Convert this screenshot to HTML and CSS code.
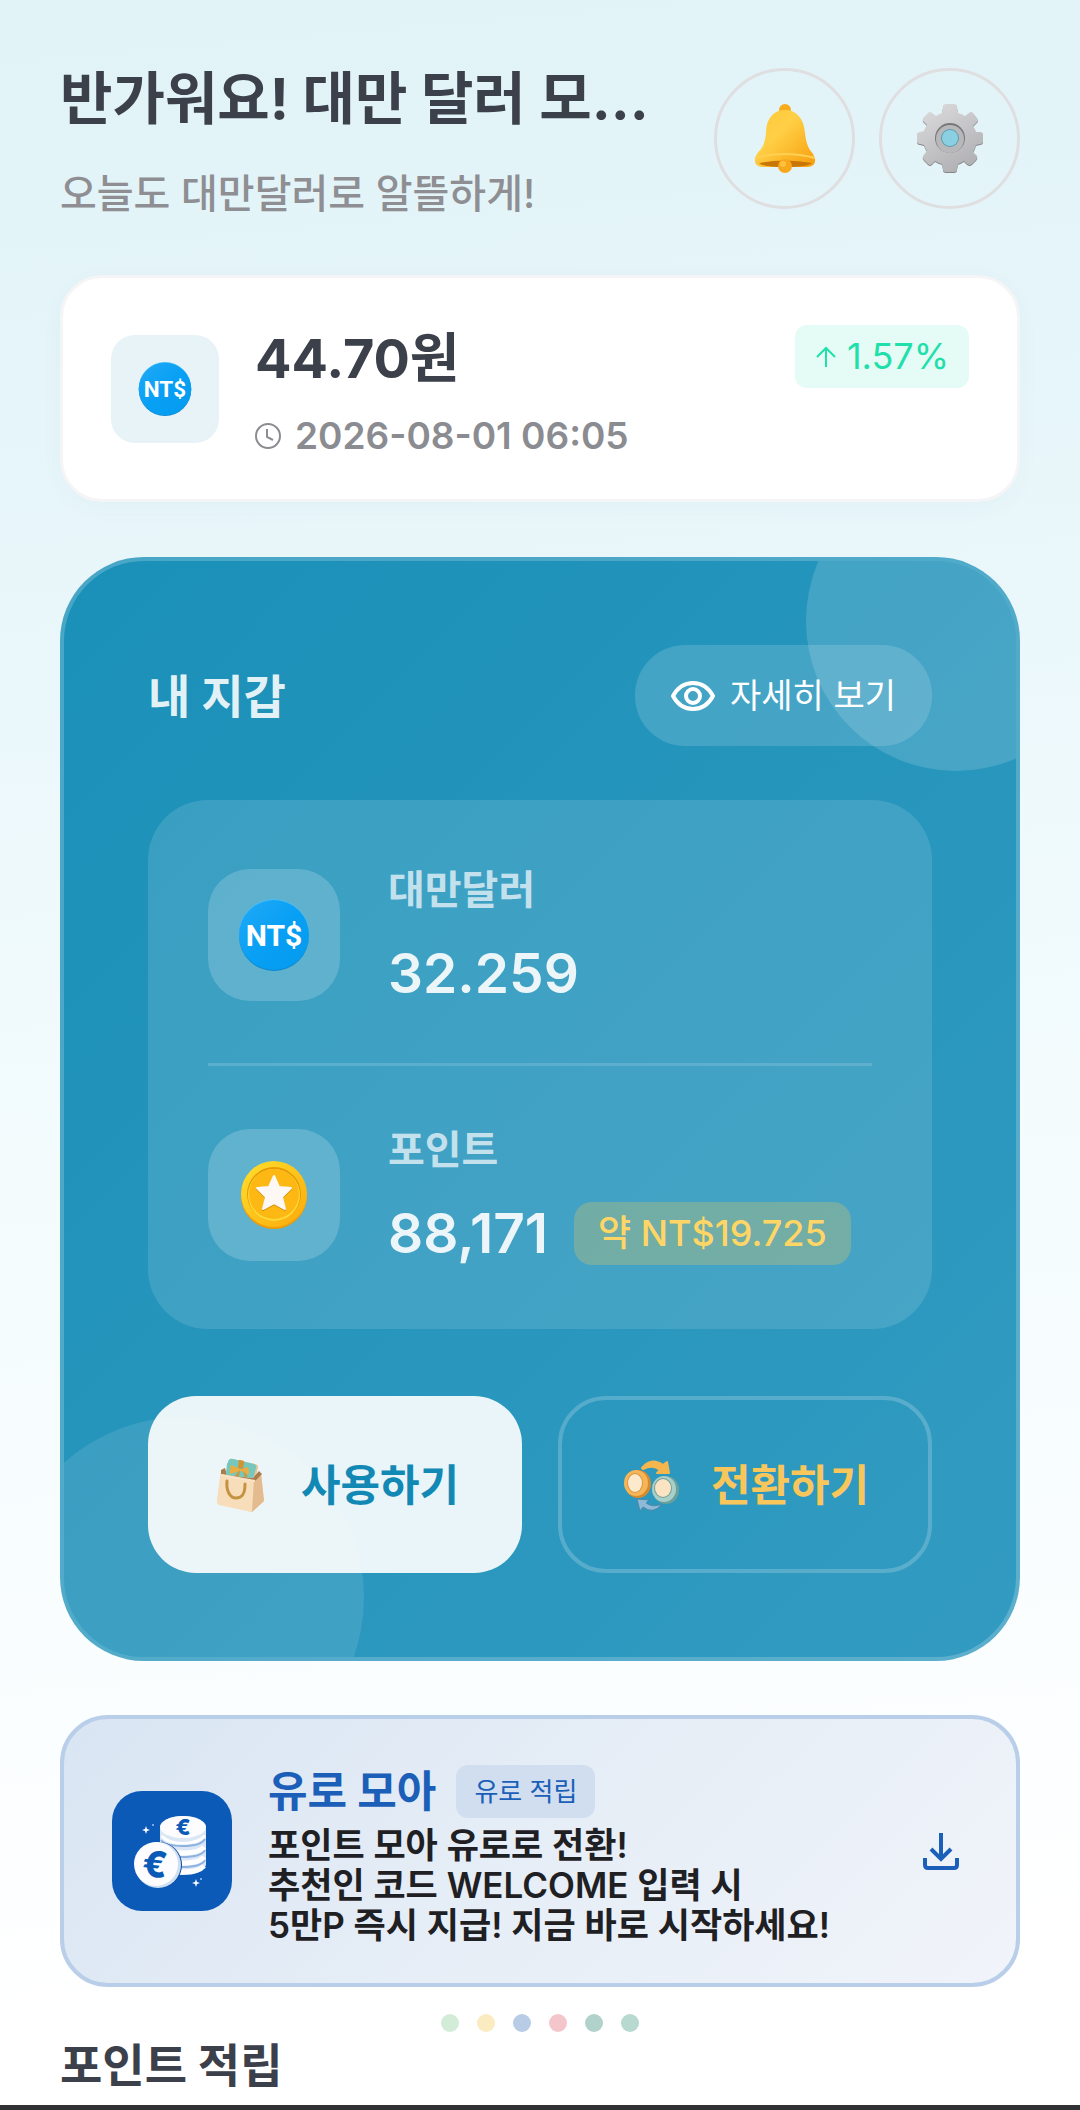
FILE: index.html
```
<!DOCTYPE html>
<html lang="ko">
<head>
  <meta charset="UTF-8">
  <meta name="viewport" content="width=device-width, initial-scale=1.0">
  <title>대만 달러 모아</title>
  <link rel="stylesheet" href="styles.css">
</head>
<body>
  <main class="page">

    <header class="header">
      <div class="greeting">
        <h1>반가워요! 대만 달러 모...</h1>
        <p>오늘도 대만달러로 알뜰하게!</p>
      </div>
      <div class="header-buttons">
        <button type="button" class="round-button" aria-label="알림">
          <svg width="66" height="70" viewBox="0 0 66 70">
            <defs>
              <linearGradient id="bell" x1="0" y1="0" x2="1" y2="1">
                <stop offset="0" stop-color="#ffc93c"/>
                <stop offset="0.4" stop-color="#ffcf45"/>
                <stop offset="1" stop-color="#f79d0c"/>
              </linearGradient>
            </defs>
            <circle cx="33" cy="7" r="6" fill="#f8ac1c"/>
            <path d="M3 56 Q4 51 9 46 Q13 41 14 30 C14 15 22 7 33 7 C44 7 52 15 53 30 Q54 41 58 47 Q62 51 63 56 Q64 64 55 64 L11 64 Q2 64 3 56Z" fill="url(#bell)"/>
            <path d="M7 60 Q33 55 60 60 Q56 64 33 64 Q11 64 7 60Z" fill="#c97704"/>
            <path d="M3 55 Q33 47 63 55" fill="none" stroke="#ffd054" stroke-width="2"/>
            <circle cx="33" cy="63" r="7" fill="#f8a81b"/>
            <circle cx="31" cy="61" r="3" fill="#ffc23e"/>
          </svg>
        </button>
        <button type="button" class="round-button" aria-label="설정">
          <svg width="68" height="70" viewBox="0 0 68 70">
            <defs>
              <linearGradient id="steel" gradientUnits="userSpaceOnUse" x1="14" y1="4" x2="50" y2="66">
                <stop offset="0" stop-color="#d9d9db"/>
                <stop offset="1" stop-color="#b0b0b2"/>
              </linearGradient>
              <path id="gear" d="M27 4 Q27 1 30 1 H38 Q41 1 41 4 L42 10 Q46 11 49 13 L53 10 Q55 8 57 10 L61 15 Q63 17 61 19 L57 23 Q59 26 60 29 L64 29 Q67 29 67 32 V38 Q67 41 64 41 L60 42 Q59 46 57 49 L61 53 Q62 55 60 57 L56 61 Q54 63 51 61 L48 58 Q45 60 42 61 L41 66 Q41 69 38 69 H30 Q27 69 27 66 L26 61 Q22 60 19 58 L16 61 Q14 63 12 61 L8 57 Q6 55 7 53 L11 48 Q9 45 8 42 L4 41 Q1 41 1 38 V32 Q1 29 4 29 L8 28 Q9 25 11 22 L7 18 Q6 16 8 14 L12 10 Q14 8 16 10 L20 13 Q23 11 26 10Z"/>
            </defs>
            <use href="#gear" fill="#848487" transform="translate(0 1)"/>
            <use href="#gear" fill="url(#steel)"/>
            <circle cx="34" cy="35" r="15" fill="#77777a"/>
            <circle cx="34" cy="36" r="14" fill="#b8b8ba"/>
            <circle cx="34" cy="35" r="9" fill="#5b9db1"/>
            <circle cx="34" cy="35" r="8" fill="#8bcfe3"/>
          </svg>
        </button>
      </div>
    </header>

    <section class="rate-card">
      <div class="rate-icon">
        <svg width="54" height="56" viewBox="0 0 72 74">
          <defs>
            <linearGradient id="ntd" x1="0" y1="0" x2="1" y2="1">
              <stop offset="0" stop-color="#22a9f7"/>
              <stop offset="0.5" stop-color="#08a0f4"/>
              <stop offset="1" stop-color="#049bef"/>
            </linearGradient>
            <g id="ntd-coin">
              <circle cx="36" cy="38" r="35" fill="#0a86d2"/>
              <circle cx="36" cy="36" r="35" fill="#4bbdf7"/>
              <circle cx="36" cy="37" r="35" fill="url(#ntd)"/>
              <text class="coin-text" x="36" y="48" text-anchor="middle">NT$</text>
            </g>
          </defs>
          <use href="#ntd-coin"/>
        </svg>
      </div>
      <div class="rate-info">
        <div class="rate-value">44.70원</div>
        <div class="rate-date">
          <svg width="26" height="26" viewBox="0 0 26 26" fill="none" stroke="#8b8c91" stroke-width="2">
            <circle cx="13" cy="13" r="12"/>
            <path d="M12 6 V14 L18 17"/>
          </svg>
          <time datetime="2026-08-01T06:05">2026-08-01 06:05</time>
        </div>
      </div>
      <div class="rate-change">
        <svg width="22" height="24" viewBox="0 0 22 24" fill="none" stroke="#1fe0ab" stroke-width="2">
          <path d="M11 22 V3 M2 12 L11 3 L20 12"/>
        </svg>
        <span>1.57%</span>
      </div>
    </section>

    <section class="wallet">
      <div class="wallet-header">
        <h2>내 지갑</h2>
        <button type="button" class="detail-button">
          <svg width="44" height="30" viewBox="0 0 44 30" fill="none" stroke="#fff" stroke-width="4">
            <path d="M2 15 Q9 2 22 2 Q35 2 42 15 Q35 28 22 28 Q9 28 2 15Z" stroke-linejoin="round"/>
            <circle cx="22" cy="15" r="7"/>
          </svg>
          자세히 보기
        </button>
      </div>

      <div class="balance">
        <div class="balance-row">
          <div class="balance-icon">
            <svg width="72" height="74" viewBox="0 0 72 74"><use href="#ntd-coin"/></svg>
          </div>
          <div>
            <div class="balance-label">대만달러</div>
            <div class="balance-line">
              <span class="balance-value">32.259</span>
            </div>
          </div>
        </div>
        <hr>
        <div class="balance-row">
          <div class="balance-icon">
            <svg width="66" height="68" viewBox="0 0 66 68">
              <defs>
                <linearGradient id="gold" x1="0" y1="0" x2="1" y2="1">
                  <stop offset="0" stop-color="#ffe02e"/>
                  <stop offset="1" stop-color="#fba90a"/>
                </linearGradient>
              </defs>
              <circle cx="33" cy="35" r="33" fill="#ef9c06"/>
              <circle cx="33" cy="33" r="33" fill="url(#gold)"/>
              <circle cx="33" cy="33" r="27" fill="#e79a06"/>
              <circle cx="33" cy="34" r="26" fill="#ffd93a"/>
              <circle cx="33" cy="33" r="25" fill="#fdb813"/>
              <path d="M33 16 L38 27 L50 28 L41 37 L44 49 L33 43 L22 49 L25 37 L16 28 L28 27Z" fill="#d98c08" stroke="#d98c08" stroke-width="2" stroke-linejoin="round"/>
              <path d="M33 15 L38 26 L50 27 L41 36 L44 48 L33 42 L22 48 L25 36 L16 27 L28 26Z" fill="#fdf8f3" stroke="#fdf8f3" stroke-width="2" stroke-linejoin="round"/>
            </svg>
          </div>
          <div>
            <div class="balance-label">포인트</div>
            <div class="balance-line">
              <span class="balance-value">88,171</span>
              <span class="approx">약 NT$19.725</span>
            </div>
          </div>
        </div>
      </div>

      <div class="wallet-actions">
        <button type="button" class="action use">
          <svg width="60" height="60" viewBox="0 0 60 60">
            <path d="M17 8 Q18 3 22 4 L44 9 Q48 10 47 13 L44 25 L15 22Z" fill="#e8c69c"/>
            <path d="M17 7 Q18 3 22 4 L43 9 Q46 10 45 13 L42 24 L15 21Z" fill="#76c7bc"/>
            <path d="M28 5 L33 6 L32 15 L27 15Z" fill="#dba23f"/>
            <path d="M30 16 L20 11 Q18 15 19 20 L30 17 L36 21 Q38 18 37 13Z" fill="#e8ad45"/>
            <path d="M10 15 L15 17 L45 22 L50 18 L53 46 L41 57 L8 49 Q6 49 6 46Z" fill="#f3d3ac"/>
            <path d="M10 19 L43 25 L41 57 L8 50 Q6 49 6 46Z" fill="#f8ddbb"/>
            <path d="M43 25 L50 18 L53 46 L41 57Z" fill="#e3bb8e"/>
            <path d="M10 15 L14 13 L16 20 L42 23 L48 16 L51 19 L44 26 L10 19Z" fill="#a97d4b"/>
            <path d="M16 8 L44 14 L42 23 L15 20Z" fill="#76c7bc"/>
            <path d="M30 14 L20 10 Q18 14 19 19 L30 16 L37 20 Q39 17 37 12Z" fill="#e8ad45"/>
            <path d="M28 5 L33 6 L32 14 L27 13Z M29 15 L24 21 L28 21Z M32 16 L34 22 L37 21Z" fill="#cf9433"/>
            <path d="M10 20 L44 26" stroke="#fae3c5" stroke-width="2"/>
            <path d="M16 26 C15 36 19 43 25 43 C32 43 34 38 34 29" fill="none" stroke="#c5933f" stroke-width="3" stroke-linecap="round"/>
          </svg>
          사용하기
        </button>
        <button type="button" class="action convert">
          <svg width="60" height="60" viewBox="0 0 60 60">
            <path d="M21 13 Q30 2 42 10 L46 7 L48 18 L36 18 L39 15 Q32 9 22 14Z" fill="#f5b64d" stroke="#f5b64d" stroke-width="2" stroke-linejoin="round"/>
            <ellipse cx="17" cy="29" rx="13" ry="14" fill="#d58a2d"/>
            <ellipse cx="15" cy="28" rx="12" ry="13" fill="#f6b658"/>
            <ellipse cx="14" cy="28" rx="8" ry="10" fill="#d99842"/>
            <ellipse cx="14" cy="28" rx="7" ry="9" fill="#fde9cc"/>
            <ellipse cx="45" cy="35" rx="13" ry="14" fill="#6ba09e"/>
            <ellipse cx="43" cy="34" rx="12" ry="13" fill="#a9d0c8"/>
            <ellipse cx="42" cy="33" rx="9" ry="10" fill="#759f98"/>
            <ellipse cx="42" cy="33" rx="8" ry="9" fill="#fbe4c4"/>
            <path d="M41 49 Q32 53 25 48 L28 45 L16 44 L19 56 L22 52 Q32 60 41 49Z" fill="#8dbad6" stroke="#4d87aa"/>
          </svg>
          전환하기
        </button>
      </div>
    </section>

    <a href="#" class="banner">
      <svg class="banner-icon" width="120" height="120" viewBox="0 0 120 120">
        <rect width="120" height="120" rx="30" fill="#0c5ab7"/>
        <!-- 동전 더미 -->
        <path d="M48 38 V76 Q52 84 71 84 Q90 84 94 74 V38Z" fill="#dbe7f7"/>
        <g fill="none" stroke="#8db2e0" stroke-width="2">
          <path d="M49 49 Q53 55 71 55 Q89 55 93 48"/>
          <path d="M49 60 Q53 66 71 66 Q89 66 93 59"/>
          <path d="M49 70 Q53 76 71 76 Q89 76 93 69"/>
        </g>
        <g fill="none" stroke="#fff" stroke-width="5">
          <path d="M51 44 Q55 51 71 51 Q87 51 92 44"/>
          <path d="M51 56 Q55 62 71 62 Q87 62 92 56"/>
          <path d="M51 66 Q55 72 71 72 Q87 72 92 66"/>
          <path d="M51 75 Q55 81 71 81 Q87 81 92 75"/>
        </g>
        <ellipse cx="71" cy="38" rx="23" ry="13" fill="#dce7f5"/>
        <ellipse cx="71" cy="36" rx="23" ry="11" fill="#fdfdff"/>
        <text class="euro-small" x="71" y="44" text-anchor="middle">€</text>
        <circle cx="47" cy="74" r="23" fill="#0a489a"/>
        <circle cx="46" cy="74" r="23" fill="#cfdff3"/>
        <circle cx="44" cy="73" r="22" fill="#fdfdff"/>
        <text class="euro" x="43" y="86" text-anchor="middle" transform="rotate(6 43 73)">€</text>
        <path d="M34 35 L35 38 L38 39 L35 40 L34 43 L33 40 L30 39 L33 38Z M84 88 L85 91 L88 92 L85 93 L84 96 L83 93 L80 92 L83 91Z" fill="#fff"/>
        <circle cx="41" cy="34" r="1" fill="#9cc3f5"/>
        <circle cx="89" cy="88" r="1" fill="#9cc3f5"/>
      </svg>
      <div class="banner-body">
        <div class="banner-title">
          <strong>유로 모아</strong>
          <span>유로 적립</span>
        </div>
        <p>포인트 모아 유로로 전환!<br>추천인 코드 WELCOME 입력 시<br>5만P 즉시 지급! 지금 바로 시작하세요!</p>
      </div>
      <svg class="download" width="36" height="38" viewBox="0 0 36 38" fill="none" stroke="#1b5fb8" stroke-width="4">
        <path d="M18 1 V26 M8 17 L18 27 L28 17"/>
        <path d="M2 26 V33 Q2 36 5 36 H31 Q34 36 34 33 V26"/>
      </svg>
    </a>

    <div class="dots">
      <span class="green"></span>
      <span class="yellow"></span>
      <span class="blue"></span>
      <span class="pink"></span>
      <span class="teal"></span>
      <span class="mint"></span>
    </div>

    <h2 class="section-title">포인트 적립</h2>
  </main>
  <div class="bottom-bar"></div>
</body>
</html>
```

FILE: styles.css
```
* {
  box-sizing: border-box;
}

body {
  margin: 0;
  min-height: 100vh;
  background: linear-gradient(175deg, #e1f3f7 0%, #e5f5f9 18%, #f2fbfd 50%, #fbfeff 80%, #ffffff 92%);
  font-family: Inter, "Noto Sans CJK KR", sans-serif;
  color: #3b404a;
}

h1, h2, p {
  margin: 0;
}

button {
  font-family: inherit;
  border: none;
  padding: 0;
  cursor: pointer;
}

svg {
  display: block;
  flex-shrink: 0;
}

.page {
  padding: 56px 60px 0;
}

/* 상단 인사말 */
.header {
  display: flex;
  justify-content: space-between;
  align-items: center;
}

.greeting h1 {
  font-size: 57px;
  line-height: 86px;
  font-weight: 700;
  white-space: nowrap;
}

.greeting p {
  margin-top: 26px;
  font-size: 40px;
  line-height: 52px;
  font-weight: 500;
  color: #8e8e93;
}

.header-buttons {
  display: flex;
  gap: 24px;
}

.round-button {
  display: flex;
  align-items: center;
  justify-content: center;
  width: 141px;
  height: 141px;
  border: 3px solid #dfdee1;
  border-radius: 50%;
  background: transparent;
}

/* 환율 카드 */
.rate-card {
  display: flex;
  align-items: center;
  gap: 36px;
  margin-top: 55px;
  padding: 42px 48px;
  background: #fff;
  border: 3px solid #f5f4f6;
  border-radius: 42px;
  box-shadow: 0 6px 24px rgba(0, 80, 90, 0.03);
}

.rate-icon {
  display: flex;
  align-items: center;
  justify-content: center;
  width: 108px;
  height: 108px;
  border-radius: 24px;
  background: #e7f3f7;
}

.coin-text {
  font-family: Roboto, sans-serif;
  font-size: 30px;
  font-weight: 700;
  fill: #fff;
}

.rate-info {
  flex: 1;
}

.rate-value {
  font-size: 54px;
  line-height: 78px;
  font-weight: 700;
}

.rate-date {
  display: flex;
  align-items: center;
  gap: 14px;
  margin-top: 17px;
  font-size: 37px;
  line-height: 42px;
  font-weight: 600;
  color: #8b8c91;
}

.rate-change {
  display: flex;
  align-items: center;
  align-self: flex-start;
  gap: 10px;
  margin-top: 5px;
  padding: 0 20px;
  border-radius: 12px;
  background: #e5fbf5;
  color: #1fe0ab;
  font-size: 36px;
  line-height: 63px;
}

/* 내 지갑 */
.wallet {
  position: relative;
  overflow: hidden;
  margin-top: 55px;
  padding: 84px;
  border: 4px solid rgba(255, 255, 255, 0.2);
  border-radius: 84px;
  background: linear-gradient(135deg, #1a90b8, #339bc1) border-box;
}

.wallet::before,
.wallet::after {
  content: "";
  position: absolute;
  border-radius: 50%;
}

.wallet::before {
  top: -90px;
  right: -90px;
  width: 300px;
  height: 300px;
  background: rgba(255, 255, 255, 0.15);
}

.wallet::after {
  bottom: -120px;
  left: -60px;
  width: 360px;
  height: 360px;
  background: rgba(255, 255, 255, 0.1);
}

.wallet-header,
.balance,
.wallet-actions {
  position: relative;
  z-index: 1;
}

.wallet-header {
  display: flex;
  justify-content: space-between;
  align-items: center;
}

.wallet-header h2 {
  font-size: 46px;
  line-height: 66px;
  font-weight: 700;
  color: rgba(255, 255, 255, 0.9);
}

.detail-button {
  display: flex;
  align-items: center;
  gap: 15px;
  padding: 0 36px;
  border-radius: 50px;
  background: rgba(255, 255, 255, 0.15);
  color: #fff;
  font-size: 34px;
  line-height: 101px;
}

.balance {
  margin-top: 54px;
  padding: 60px;
  border-radius: 60px;
  background: rgba(255, 255, 255, 0.12);
}

.balance hr {
  height: 3px;
  margin: 54px 0;
  border: none;
  background: rgba(255, 255, 255, 0.15);
}

.balance-row {
  display: flex;
  align-items: center;
  gap: 48px;
}

.balance-icon {
  display: flex;
  align-items: center;
  justify-content: center;
  width: 132px;
  height: 132px;
  border-radius: 42px;
  background: rgba(255, 255, 255, 0.18);
}

.balance-label {
  font-size: 40px;
  line-height: 60px;
  font-weight: 600;
  color: rgba(255, 255, 255, 0.7);
}

.balance-line {
  display: flex;
  align-items: center;
  gap: 26px;
  margin-top: 17px;
}

.balance-value {
  font-size: 55px;
  line-height: 72px;
  font-weight: 600;
  color: rgba(255, 255, 255, 0.9);
}

.approx {
  padding: 0 24px;
  border-radius: 18px;
  background: rgba(255, 204, 77, 0.25);
  color: #ffd666;
  font-size: 36px;
  line-height: 63px;
  font-weight: 500;
}

.wallet-actions {
  display: grid;
  grid-template-columns: 1fr 1fr;
  gap: 36px;
  margin-top: 67px;
}

.action {
  display: flex;
  align-items: center;
  justify-content: center;
  gap: 30px;
  height: 177px;
  border-radius: 48px;
  font-size: 43px;
  line-height: 60px;
  font-weight: 700;
}

.action.use {
  background: rgba(255, 255, 255, 0.9);
  color: #1289b5;
}

.action.convert {
  border: 4px solid rgba(255, 255, 255, 0.2);
  background: transparent;
  color: #f8c65b;
}

/* 유로 모아 배너 */
.banner {
  display: flex;
  align-items: center;
  gap: 36px;
  margin-top: 54px;
  padding: 38px 57px 38px 48px;
  border: 4px solid #b9cee8;
  border-radius: 48px;
  background: linear-gradient(135deg, #d9e5f3, #e5edf6 45%, #f1f4fa);
  color: #1f2023;
  text-decoration: none;
}

.banner-body {
  flex: 1;
  padding-top: 7px;
}

.banner-title {
  display: flex;
  align-items: center;
  gap: 20px;
}

.banner-title strong {
  font-size: 43px;
  line-height: 54px;
  font-weight: 700;
  color: #1b5fb8;
}

.banner-title span {
  padding: 0 18px;
  border-radius: 12px;
  background: #d0deef;
  color: #1b5fb8;
  font-size: 26px;
  line-height: 53px;
}

.banner-body p {
  margin-top: 7px;
  font-size: 35px;
  line-height: 40px;
  font-weight: 600;
}

.euro {
  font-size: 36px;
  font-weight: 800;
  fill: #0c5ab7;
}

.euro-small {
  font-size: 22px;
  font-weight: 800;
  fill: #0c5ab7;
}

/* 배너 페이지 표시 */
.dots {
  display: flex;
  justify-content: center;
  gap: 18px;
  margin-top: 27px;
}

.dots span {
  width: 18px;
  height: 18px;
  border-radius: 50%;
}

.dots .green { background: #d3ecd7; }
.dots .yellow { background: #faebc0; }
.dots .blue { background: #b8cce6; }
.dots .pink { background: #f4c6cc; }
.dots .teal { background: #b1d2ca; }
.dots .mint { background: #b7d9d0; }

.section-title {
  font-size: 46px;
  line-height: 66px;
  font-weight: 700;
}

.bottom-bar {
  position: fixed;
  left: 0;
  right: 0;
  bottom: 0;
  height: 5px;
  background: #303133;
}
```
